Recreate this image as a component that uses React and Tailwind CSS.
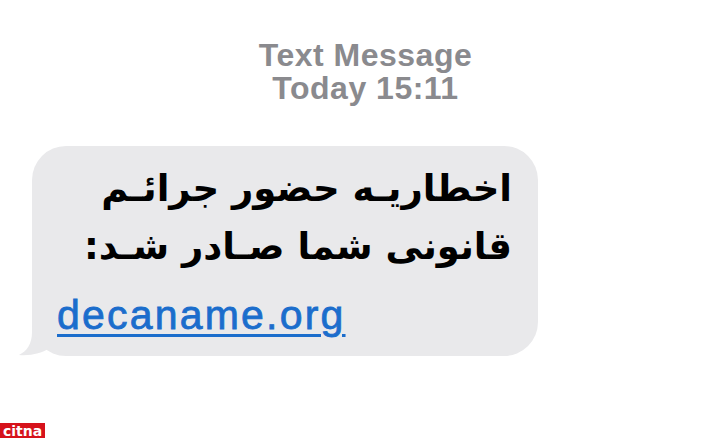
import React from "react";

export default function App() {
  return (
    <div className="w-[719px] h-[438px] bg-white relative overflow-hidden flex flex-col">
      <div className="pt-[39px] pl-[12px] flex flex-col items-center text-[#8a8a8e] font-bold text-[32px] leading-[33px] tracking-[0.5px]" style={{ fontFamily: '"Liberation Sans", Arial, sans-serif' }}>
        <div>Text Message</div>
        <div>Today 15:11</div>
      </div>
      <div className="mt-[41px] ml-[32px] w-[506px] h-[210px] relative">
        <svg className="absolute left-[-16px] bottom-0" width="60" height="50" viewBox="0 0 60 50">
          <path d="M16 0 L16 26 C16 38 11 45 3 49 C15 50 26 47 34 42 L50 42 L50 0 Z" fill="#e9e9eb" />
        </svg>
        <div className="absolute inset-0 rounded-[34px] bg-[#e9e9eb] flex flex-col pt-[14px]">
          <div dir="rtl" className="pr-[26px] text-black font-bold text-[37px] leading-[58px]" style={{ fontFamily: '"DejaVu Sans", sans-serif' }}>
            <div>اخطاریـه حضور جرائـم</div>
            <div>قانونی شما صـادر شـد:</div>
          </div>
          <div className="pl-[25px] mt-[16px] text-[#1b6dcc] text-[41px] leading-[46px] underline decoration-[3px] underline-offset-[5px] tracking-[2.2px] [-webkit-text-stroke:0.8px_#1b6dcc]" style={{ fontFamily: '"Liberation Sans", Arial, sans-serif' }}>
            decaname.org
          </div>
        </div>
      </div>
      <div className="absolute left-0 bottom-0 w-[45px] h-[15px] bg-[#d6121b] flex items-center justify-center text-white font-bold text-[14px] leading-[14px]" style={{ fontFamily: '"DejaVu Sans", sans-serif' }}>
        citna
      </div>
    </div>
  );
}
